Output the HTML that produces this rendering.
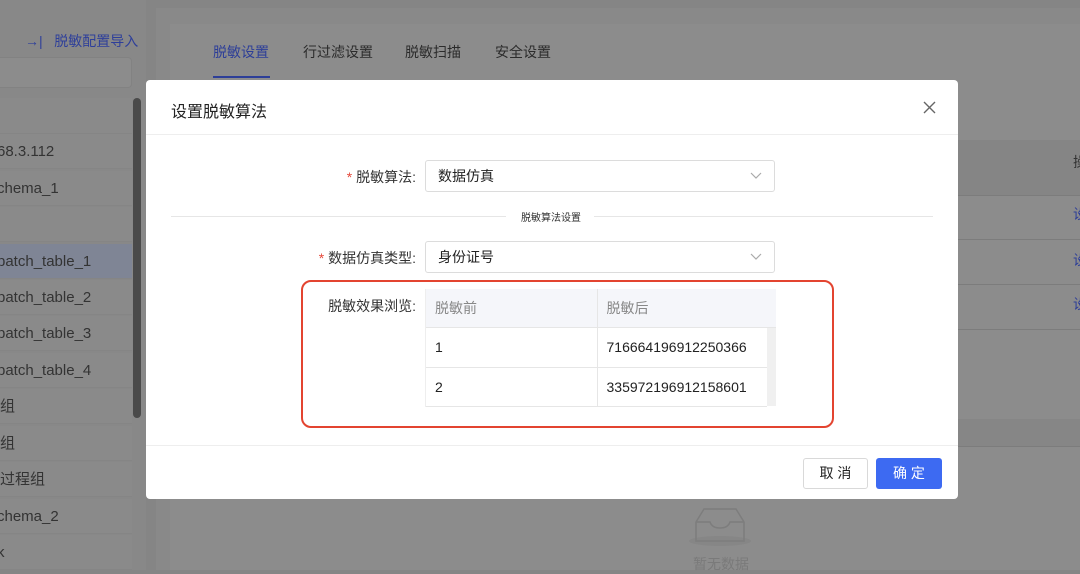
<!DOCTYPE html>
<html><head><meta charset="utf-8"><style>
*{margin:0;padding:0;box-sizing:border-box}
body{width:1080px;height:570px;overflow:hidden;background:#858585;font-family:"Liberation Sans","Noto Sans CJK SC",sans-serif;position:relative;color:#2a2a2a}
.abs{position:absolute}
.left{left:0;top:0;width:146px;height:570px;background:#888}
.row{position:absolute;left:0;width:132px;height:35px;background:#8a8a8a;font-size:15px;color:#333;line-height:35px;border-bottom:1px solid #858585;text-indent:-3px;overflow:hidden}
.main{left:156px;top:8px;width:924px;height:562px;background:#898989}
.card{left:170px;top:24px;width:910px;height:546px;background:#8c8c8c}
.tab{position:absolute;top:42px;font-size:14px;color:#2b2b2b}
.modal{left:146px;top:80px;width:812px;height:419px;background:#fff;border-radius:4px}
.sel{position:absolute;left:279px;width:350px;height:32px;border:1px solid #dcdcdc;border-radius:3px;font-size:14px;line-height:30px;padding-left:12px;color:#222}
.sel svg{position:absolute;right:12px;top:11px}
.lbl{position:absolute;font-size:14px;color:#333;text-align:right;right:542px}
.star{color:#e5483a}
td{border-bottom:1px solid #e6e6e6;font-size:14px;color:#222;padding-left:9px}
</style></head><body>
<div class="abs left">
<div class="abs" style="left:25px;top:31px;font-size:14px;color:#2e3f9a">→|&nbsp;&nbsp;&nbsp;脱敏配置导入</div>
<div class="abs" style="left:0;top:57px;width:132px;height:31px;background:#8c8c8c;border:1px solid #828282;border-left:none;border-radius:0 4px 4px 0"></div>
<div class="row" style="top:98px;height:36px"></div>
<div class="row" style="top:134px">68.3.112</div>
<div class="row" style="top:171px">chema_1</div>
<div class="row" style="top:207px"></div>
<div class="row" style="top:244px;background:#7f8595">batch_table_1</div>
<div class="row" style="top:280px">batch_table_2</div>
<div class="row" style="top:316px">batch_table_3</div>
<div class="row" style="top:353px">batch_table_4</div>
<div class="row" style="top:389px;text-indent:0">组</div>
<div class="row" style="top:426px;text-indent:0">组</div>
<div class="row" style="top:462px;text-indent:0">过程组</div>
<div class="row" style="top:499px">chema_2</div>
<div class="row" style="top:535px">k</div>
<div class="abs" style="left:133px;top:98px;width:8px;height:320px;background:#4a4a4a;border-radius:4px"></div>
</div>
<div class="abs main"></div>
<div class="abs card">
<div class="tab" style="left:43px;top:18px;color:#2d3e98">脱敏设置</div>
<div class="abs" style="left:43px;top:52px;width:57px;height:2px;background:#2d3e98"></div>
<div class="tab" style="left:133px;top:18px">行过滤设置</div>
<div class="tab" style="left:235px;top:18px">脱敏扫描</div>
<div class="tab" style="left:325px;top:18px">安全设置</div>
<div class="abs" style="left:788px;top:116px;width:122px;height:56px;background:#858585;border-bottom:1px solid #7c7c7c"></div>
<div class="abs" style="left:788px;top:172px;width:122px;height:44px;border-bottom:1px solid #7c7c7c"></div>
<div class="abs" style="left:788px;top:216px;width:122px;height:45px;border-bottom:1px solid #7c7c7c"></div>
<div class="abs" style="left:788px;top:261px;width:122px;height:45px;border-bottom:1px solid #7c7c7c"></div>
<div class="abs" style="left:788px;top:395px;width:122px;height:28px;background:#868686;border-bottom:1px solid #7c7c7c"></div>
<div class="abs" style="left:903px;top:128px;font-size:14px;color:#333">操</div>
<div class="abs" style="left:903px;top:180px;font-size:14px;color:#2d3e98">设</div>
<div class="abs" style="left:903px;top:226px;font-size:14px;color:#2d3e98">设</div>
<div class="abs" style="left:903px;top:270px;font-size:14px;color:#2d3e98">设</div>
<svg class="abs" style="left:518px;top:480px" width="66" height="44"><ellipse cx="32" cy="37" rx="31" ry="5" fill="#868686"/><path d="M8 18 L16 5 H48 L56 18 V37 H8 Z M8 18 H22 Q24 24 32 24 Q40 24 42 18 H56" fill="none" stroke="#7d7d7d" stroke-width="1.5"/></svg>
<div class="abs" style="left:523px;top:530px;font-size:14px;color:#7a7a7a">暂无数据</div>
</div>

<div class="abs modal">
<div class="abs" style="left:25px;top:18px;font-size:16px;color:#222">设置脱敏算法</div>
<svg class="abs" style="left:777px;top:21px" width="13" height="13"><path d="M1 1L12 12M12 1L1 12" stroke="#666" stroke-width="1.4"/></svg>
<div class="abs" style="left:0;top:54px;width:812px;height:1px;background:#eee"></div>
<div class="lbl" style="top:87px"><span class="star">* </span>脱敏算法:</div>
<div class="sel" style="top:80px">数据仿真<svg width="12" height="8"><path d="M1 1L6 6L11 1" fill="none" stroke="#aaa" stroke-width="1.2"/></svg></div>
<div class="abs" style="left:25px;top:136px;width:335px;height:1px;background:#e6e6e6"></div>
<div class="abs" style="left:375px;top:129px;font-size:10px;color:#333">脱敏算法设置</div>
<div class="abs" style="left:448px;top:136px;width:339px;height:1px;background:#e6e6e6"></div>
<div class="lbl" style="top:168px"><span class="star">* </span>数据仿真类型:</div>
<div class="sel" style="top:161px">身份证号<svg width="12" height="8"><path d="M1 1L6 6L11 1" fill="none" stroke="#aaa" stroke-width="1.2"/></svg></div>
<div class="abs" style="left:155px;top:200px;width:533px;height:148px;border:2px solid #e34430;border-radius:10px"></div>
<div class="lbl" style="top:216px">脱敏效果浏览:</div>
<div class="abs" style="left:279px;top:209px;width:350px;height:118px;border-left:1px solid #eee">
<table style="border-collapse:collapse;width:350px">
<tr style="height:38px;background:#f5f6fa"><td style="color:#888;border-right:1px solid #e6e6e6;width:171px">脱敏前</td><td style="color:#888" colspan="2">脱敏后</td></tr>
<tr style="height:40px"><td style="border-right:1px solid #e6e6e6">1</td><td>716664196912250366</td><td style="width:9px;background:#f0f0f0;border-bottom:none;padding:0"></td></tr>
<tr style="height:39px"><td style="border-right:1px solid #e6e6e6">2</td><td>335972196912158601</td><td style="background:#f0f0f0;border-bottom:none;padding:0"></td></tr>
</table></div>
<div class="abs" style="left:0;top:365px;width:812px;height:1px;background:#eee"></div>
<div class="abs" style="left:657px;top:378px;width:65px;height:31px;border:1px solid #d9d9d9;border-radius:3px;font-size:14px;text-align:center;line-height:29px;color:#222">取 消</div>
<div class="abs" style="left:730px;top:378px;width:66px;height:31px;background:#3d6af2;border-radius:3px;font-size:14px;text-align:center;line-height:31px;color:#fff">确 定</div>
</div>
</body></html>
